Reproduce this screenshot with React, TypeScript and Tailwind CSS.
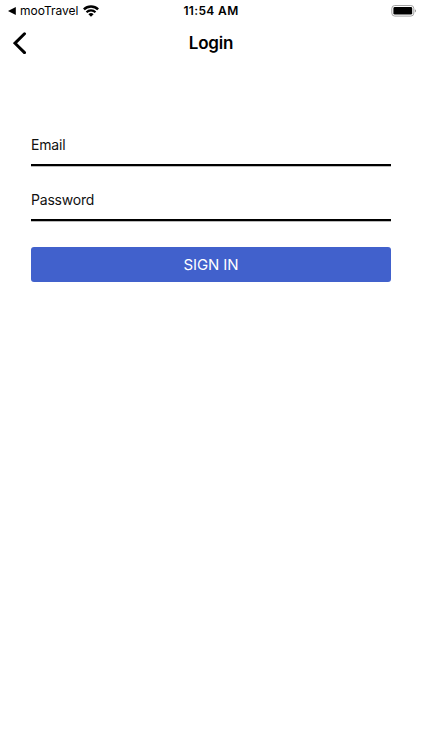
import { useState } from 'react';

function StatusBar() {
  return (
    <div className="grid h-[22px] grid-cols-3 items-center px-[6px]">
      <div className="flex items-center pl-[2px]">
        <svg width="8" height="8" viewBox="0 0 8 8" className="mr-1">
          <path d="M0 4 7.8 0.1V7.9Z" fill="#000" />
        </svg>
        <span className="text-[12px]">mooTravel</span>
        <svg width="16" height="12" viewBox="0 0 16 12" fill="none" stroke="#000" className="ml-1">
          <path d="M0.9 4.4a10.2 10.2 0 0 1 14.2 0" strokeWidth="2.5" />
          <path d="M3.5 7.2a6.5 6.5 0 0 1 9 0" strokeWidth="2.2" />
          <path d="M8 11.8 5.4 9.2a3.7 3.7 0 0 1 5.2 0Z" fill="#000" stroke="none" />
        </svg>
      </div>
      <div className="text-center text-[12px] font-semibold tracking-[0.35px]">11:54 AM</div>
      <svg width="25" height="12" viewBox="0 0 25 12" className="justify-self-end">
        <rect x="0.8" y="0.5" width="22" height="10.6" rx="3" fill="none" stroke="#a3a3a3" />
        <rect x="2.4" y="2" width="18.8" height="7.6" rx="1.4" fill="#000" />
        <path d="M23.9 4.2c1.4.6 1.4 2.6 0 3.2Z" fill="#8c8c8c" />
      </svg>
    </div>
  );
}

function Header() {
  return (
    <div className="grid h-[42px] grid-cols-3 items-center px-[13px]">
      <button aria-label="Back" className="w-fit">
        <svg width="14" height="22" viewBox="0 0 14 22" fill="none" stroke="#000" strokeWidth="3">
          <path d="M11.5 1.8 2 11.2l9.5 9.4" strokeLinecap="round" strokeLinejoin="miter" />
        </svg>
      </button>
      <h1 className="pt-[2px] text-center text-[17px] font-semibold tracking-[-0.2px]">Login</h1>
    </div>
  );
}

type FieldProps = {
  label: string;
  type: string;
  value: string;
  onChange: (value: string) => void;
};

function Field({ label, type, value, onChange }: FieldProps) {
  return (
    <input
      type={type}
      placeholder={label}
      aria-label={label}
      value={value}
      onChange={(e) => onChange(e.target.value)}
      className="block h-[43px] w-full border-b-2 border-black pt-[1px] text-[14px] tracking-[-0.2px] shadow-[0_1px_0_#bbb] outline-none placeholder:text-[#111]"
    />
  );
}

export default function App() {
  const [email, setEmail] = useState('');
  const [password, setPassword] = useState('');

  return (
    <div className="min-h-screen bg-white font-[Inter,'Liberation_Sans',sans-serif] text-black">
      <StatusBar />
      <Header />
      <form className="px-[31px] pt-[59px]" onSubmit={(e) => e.preventDefault()}>
        <div className="space-y-3">
          <Field label="Email" type="text" value={email} onChange={setEmail} />
          <Field label="Password" type="password" value={password} onChange={setPassword} />
        </div>
        <button
          type="submit"
          className="mt-[26px] h-[35px] w-full rounded-[3px] bg-[#4161cc] pt-[2px] text-[15px] tracking-[-0.1px] text-white"
        >
          SIGN IN
        </button>
      </form>
    </div>
  );
}
